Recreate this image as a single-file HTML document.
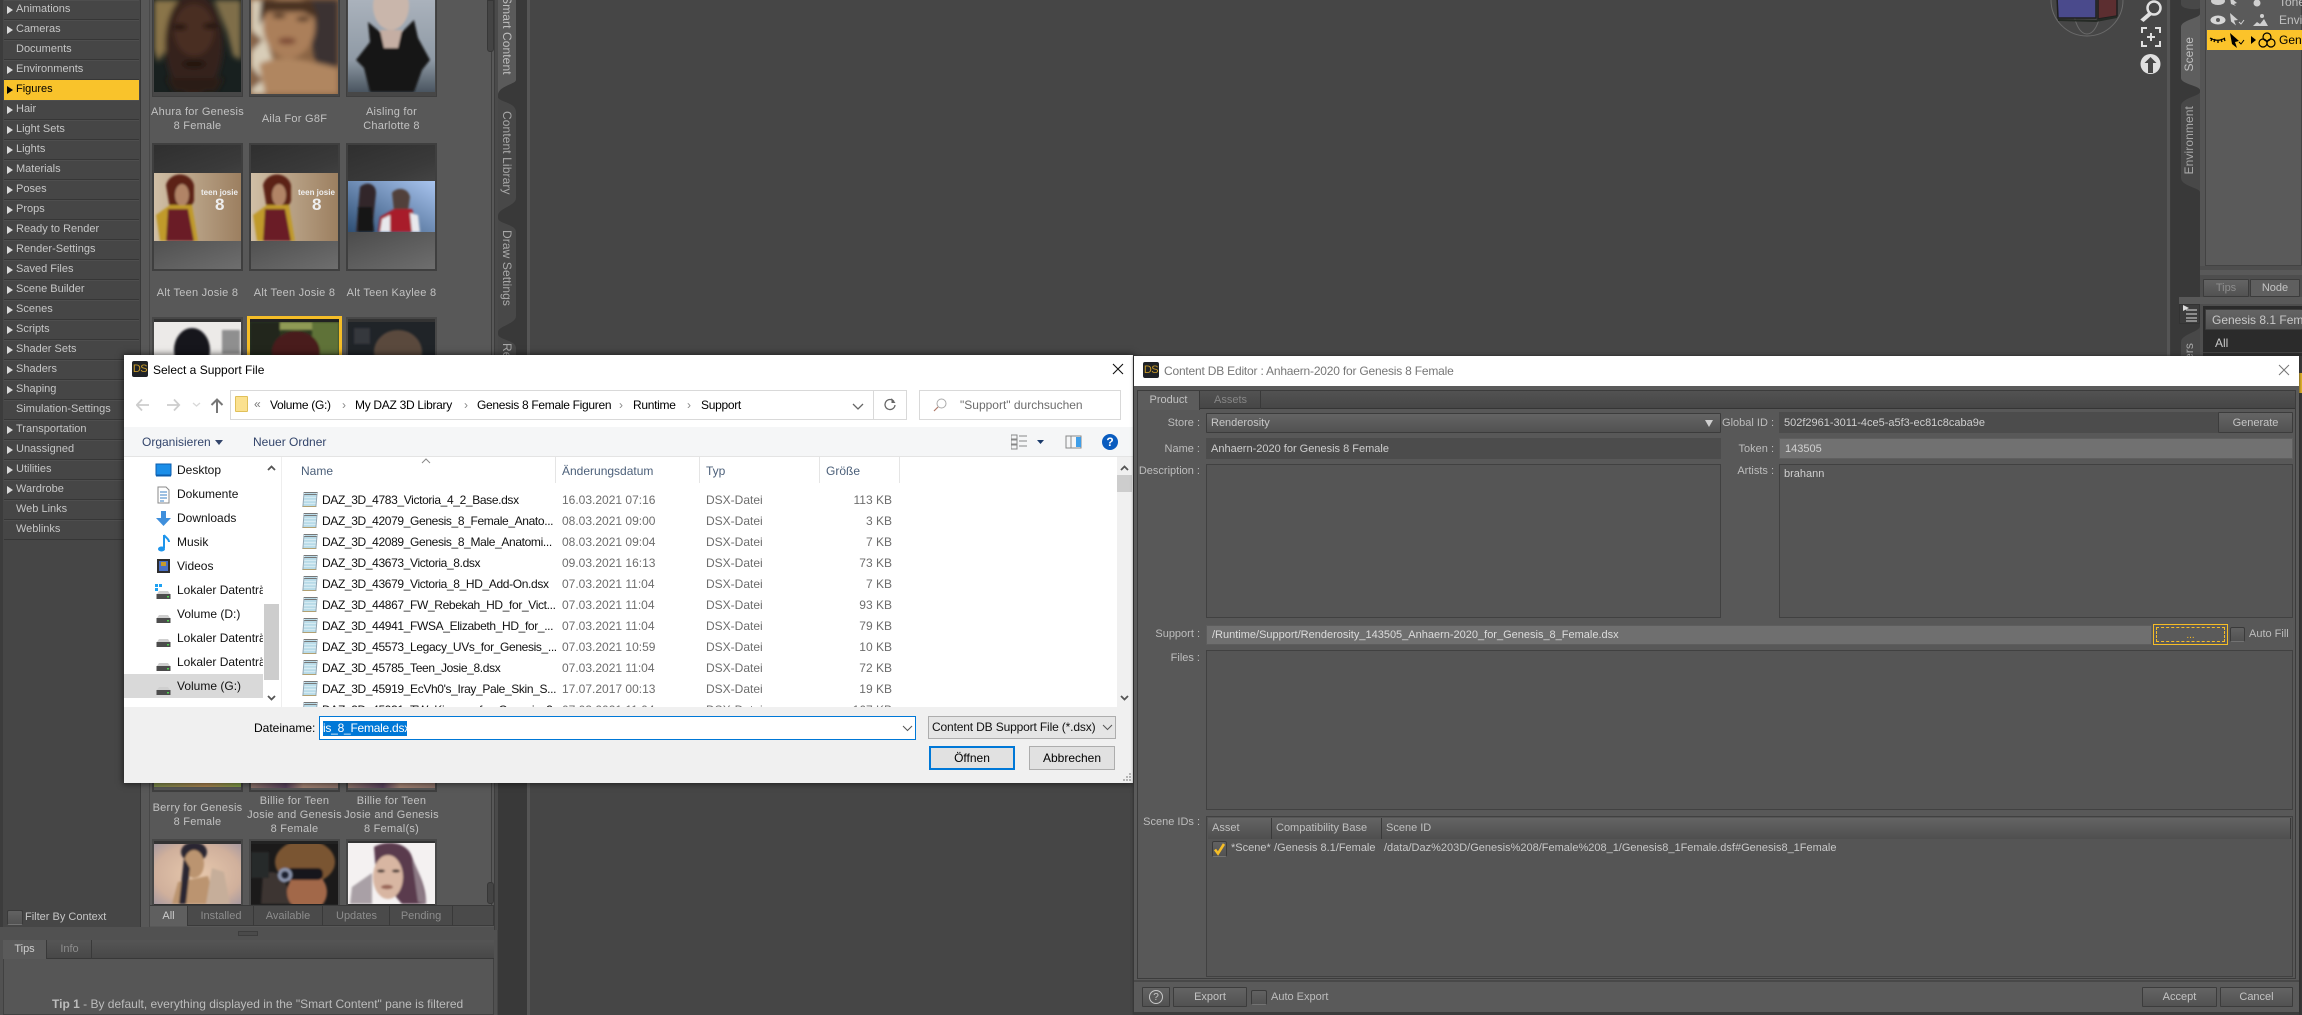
<!DOCTYPE html>
<html><head><meta charset="utf-8"><title>Content DB Editor</title>
<style>
html,body{margin:0;padding:0;background:#464646}
body{width:2302px;height:1015px;overflow:hidden;position:relative;font-family:"Liberation Sans",sans-serif;font-size:11px;color:#c4c4c4}
.a{position:absolute;white-space:nowrap;box-sizing:border-box}
svg{display:block}
.c{height:19px;line-height:19px;border-bottom:1px solid #363636;padding-left:12px;color:#c6c6c6;position:relative;box-shadow:0 1px 0 #4e4e4e inset}
.t::before{content:"";position:absolute;left:3px;top:6px;border-left:6px solid #d8d8d8;border-top:4px solid transparent;border-bottom:4px solid transparent}
.cap{text-align:center;color:#c2c2c2;line-height:14px;letter-spacing:.25px;white-space:normal}
.th{background:#474747;border:1px solid #3f3f3f;padding:0}
.vt{writing-mode:vertical-rl;font-size:12px;color:#a8a8a8;letter-spacing:.1px}
.dl{font-size:12px;color:#000;line-height:16px}
.ad{letter-spacing:-.3px}
.nv{font-size:12px;color:#111;line-height:16px;width:86px;overflow:hidden;left:177px}
.r{position:absolute;left:0;width:1100px;height:21px}
.r span{position:absolute;top:2px;line-height:16px;font-size:12px;white-space:nowrap}
.n{left:322px;color:#111;letter-spacing:-.36px}.d{left:562px;color:#6d6d6d}.y{left:706px;color:#6d6d6d}.s{right:208px;color:#6d6d6d}
.fi{position:absolute;left:303px;top:2px;width:14px;height:15px;border:1px solid #8ea4b2;border-top:3px double #777;border-bottom-color:#b3a070;background:repeating-linear-gradient(180deg,#b8dbe8 0,#b8dbe8 2px,#d8ecf3 2px,#d8ecf3 3px);box-sizing:border-box;transform:skewX(-5deg)}
.hd{font-size:12px;color:#4c607a;line-height:16px}
.vl{width:1px;background:#e5e5e5}
.lb{color:#bdbdbd;line-height:16px;text-align:right;width:90px}
.in{background:#4c4c4c;line-height:22px;color:#cfcfcf;padding-left:5px}
.box{background:#555;border:1px solid #414141}
.btn{background:linear-gradient(#646464,#525252);border:1px solid #3c3c3c;color:#c4c4c4;text-align:center;line-height:18px;border-radius:1px}
.cb{background:linear-gradient(#626262,#525252);border:1px solid #3a3a3a;border-bottom-color:#727272;border-radius:2px}
.tab{text-align:center;line-height:18px;border-right:1px solid #393939;color:#8d8d8d}
.hh{background:linear-gradient(#646464,#4f4f4f);border-right:1px solid #393939;line-height:20px;color:#c0c0c0;padding-left:4px}
</style></head><body>
<svg width="0" height="0" style="position:absolute"><filter id="b"><feGaussianBlur stdDeviation="2.6"/></filter><filter id="s"><feGaussianBlur stdDeviation="1"/></filter></svg>

<!-- left panel background -->
<div class="a" style="left:0;top:0;width:3px;height:930px;background:#3c3c3c"></div>
<div class="a" style="left:3px;top:0;width:138px;height:927px;background:#464646;border-right:1px solid #393939"></div>
<div class="a" style="left:141px;top:0;width:9px;height:930px;background:#585858;border-right:1px solid #484848"></div>
<div class="a" style="left:150px;top:0;width:344px;height:930px;background:#585858"></div>
<div class="a" style="left:0;top:927px;width:497px;height:88px;background:#515151"></div>
<div class="a" style="left:494px;top:0;width:4px;height:930px;background:#4a4a4a;border-left:1px solid #3d3d3d"></div>

<!-- category list -->
<div class="a" style="left:4px;top:0;width:135px">
<div class="c t">Animations</div><div class="c t">Cameras</div><div class="c">Documents</div><div class="c t">Environments</div>
<div class="c t" style="background:#f9c32b;color:#000;border-color:#f9c32b;box-shadow:none">Figures<i style="position:absolute;left:3px;top:6px;border-left:6px solid #000;border-top:4px solid transparent;border-bottom:4px solid transparent"></i></div>
<div class="c t">Hair</div><div class="c t">Light Sets</div><div class="c t">Lights</div><div class="c t">Materials</div><div class="c t">Poses</div><div class="c t">Props</div><div class="c t">Ready to Render</div><div class="c t">Render-Settings</div><div class="c t">Saved Files</div><div class="c t">Scene Builder</div><div class="c t">Scenes</div><div class="c t">Scripts</div><div class="c t">Shader Sets</div><div class="c t">Shaders</div><div class="c t">Shaping</div><div class="c">Simulation-Settings</div><div class="c t">Transportation</div><div class="c t">Unassigned</div><div class="c t">Utilities</div><div class="c t">Wardrobe</div><div class="c">Web Links</div><div class="c">Weblinks</div>
</div>

<!-- Thumbs row 1 -->
<div class="a th" style="left:152px;top:-30px;width:91px;height:127px"></div>
<svg class="a" style="left:154px;top:0" width="87" height="92"><rect width="87" height="92" fill="#18201f"/><g filter="url(#b)"><path d="M0 0h30l-6 20-8 24L4 62 0 50z" fill="#8a7448"/><path d="M60 0h27v60l-8-4-6-24z" fill="#7f6e4a"/><ellipse cx="40" cy="44" rx="29" ry="52" fill="#35211a"/><ellipse cx="40" cy="30" rx="20" ry="26" fill="#4a2f22"/><ellipse cx="26" cy="27" rx="7" ry="2.6" fill="#120a07"/><ellipse cx="56" cy="26" rx="7" ry="2.6" fill="#120a07"/><ellipse cx="40" cy="64" rx="12" ry="4" fill="#241209"/><path d="M12 78l58 0-8 14H20z" fill="#2a1a12"/></g></svg>
<div class="a th" style="left:249px;top:-30px;width:91px;height:127px"></div>
<svg class="a" style="left:251px;top:0" width="87" height="94"><rect width="87" height="94" fill="#8a6444"/><g filter="url(#b)"><path d="M0 0h14l-2 30 10 30-4 34H0z" fill="#d8cdb8"/><path d="M0 30l12 10L0 52zM0 66l12 14-12 10z" fill="#85644a"/><path d="M56 0h31v70H66l-6-30z" fill="#3a3330"/><ellipse cx="38" cy="26" rx="26" ry="32" fill="#ab7f5a"/><path d="M10 0h50l8 20-16-8-36 0-8 14z" fill="#4a3020"/><ellipse cx="28" cy="16" rx="7" ry="2.200" fill="#3a2416"/><ellipse cx="52" cy="19" rx="7" ry="2.200" fill="#3a2416"/><ellipse cx="36" cy="41" rx="9" ry="3.500" fill="#7d4a36"/><path d="M8 64c20-10 40-6 79 4v26H14z" fill="#b08660"/></g></svg>
<div class="a th" style="left:346px;top:-30px;width:91px;height:127px"></div>
<svg class="a" style="left:348px;top:0" width="87" height="92"><defs><linearGradient id="g3" x1="0" y1="0" x2="0" y2="1"><stop offset="0" stop-color="#aab2bc"/><stop offset=".65" stop-color="#8f9aa5"/><stop offset="1" stop-color="#4a5560"/></linearGradient></defs><rect width="87" height="92" fill="url(#g3)"/><g filter="url(#s)"><ellipse cx="43" cy="6" rx="18" ry="24" fill="#c9b6ab"/><path d="M20 22l12 10 22 0 12-12 4 18 12 22-8 10-8 22H22l-6-24-8-8 14-18z" fill="#141414"/><path d="M32 30h22l-4 18-14 0z" fill="#c5aea3"/></g></svg>
<div class="a cap" style="left:148px;top:105px;width:99px">Ahura for Genesis 8 Female</div>
<div class="a cap" style="left:245px;top:112px;width:99px">Aila For G8F</div>
<div class="a cap" style="left:342px;top:105px;width:99px">Aisling for Charlotte 8</div>

<!-- Thumbs row 2 -->
<div class="a th" style="left:152px;top:143px;width:91px;height:128px;background:linear-gradient(160deg,#2f2f2f,#3a3a3a 30%,#4f4f4f 60%,#6e6e6e);border-width:2px"></div>
<svg class="a" style="left:154px;top:173px" width="87" height="68"><defs><linearGradient id="g4" x1="0" y1="0" x2="1" y2="0"><stop offset="0" stop-color="#d0bfa6"/><stop offset="1" stop-color="#9c7f60"/></linearGradient></defs><rect width="87" height="68" fill="url(#g4)"/><g filter="url(#s)"><path d="M12 12c4-14 24-14 28 0l0 16-4 8H16z" fill="#5b2018"/><ellipse cx="28" cy="22" rx="7" ry="11" fill="#b18466"/><path d="M2 42l14-10 22 0 6 36H6z" fill="#c09a2a"/><path d="M14 36h20l6 32H12z" fill="#6a1f25"/></g><text x="47" y="22" font-size="8" font-weight="bold" fill="#eee" font-family="Liberation Sans">teen josie</text><text x="61" y="37" font-size="17" font-weight="bold" fill="#eee" font-family="Liberation Sans">8</text></svg>
<div class="a th" style="left:249px;top:143px;width:91px;height:128px;background:linear-gradient(160deg,#2f2f2f,#3a3a3a 30%,#4f4f4f 60%,#6e6e6e);border-width:2px"></div>
<svg class="a" style="left:251px;top:173px" width="87" height="68"><rect width="87" height="68" fill="url(#g4)"/><g filter="url(#s)"><path d="M12 12c4-14 24-14 28 0l0 16-4 8H16z" fill="#5b2018"/><ellipse cx="28" cy="22" rx="7" ry="11" fill="#b18466"/><path d="M2 42l14-10 22 0 6 36H6z" fill="#c09a2a"/><path d="M14 36h20l6 32H12z" fill="#6a1f25"/></g><text x="47" y="22" font-size="8" font-weight="bold" fill="#eee" font-family="Liberation Sans">teen josie</text><text x="61" y="37" font-size="17" font-weight="bold" fill="#eee" font-family="Liberation Sans">8</text></svg>
<div class="a th" style="left:346px;top:143px;width:91px;height:128px;background:linear-gradient(160deg,#2f2f2f,#3a3a3a 30%,#4f4f4f 60%,#6e6e6e);border-width:2px"></div>
<svg class="a" style="left:348px;top:181px" width="87" height="51"><defs><linearGradient id="g5" x1="0" y1="1" x2="1" y2="0"><stop offset="0" stop-color="#2f4f74"/><stop offset="1" stop-color="#a9c5f0"/></linearGradient></defs><rect width="87" height="51" fill="url(#g5)"/><g filter="url(#s)"><path d="M12 6c6-6 16-4 16 6l-4 39H8z" fill="#33282a"/><path d="M10 26h14l2 25H10z" fill="#161214"/><path d="M44 12c4-6 16-6 18 4l-2 14H46z" fill="#51403a"/><path d="M32 36l14-8h18l8 23H30z" fill="#a81f2c"/><path d="M34 38l8-4 0 17H32zM62 32l8 2 2 17h-8z" fill="#e8e8ec"/></g></svg>
<div class="a cap" style="left:148px;top:286px;width:99px">Alt Teen Josie 8</div>
<div class="a cap" style="left:245px;top:286px;width:99px">Alt Teen Josie 8</div>
<div class="a cap" style="left:342px;top:286px;width:99px">Alt Teen Kaylee 8</div>

<!-- Thumbs row 3 -->
<div class="a" style="left:152px;top:317px;width:91px;height:45px;background:#333;border:2px solid #474747"></div>
<svg class="a" style="left:154px;top:322px" width="87" height="33"><rect width="87" height="33" fill="#eceae8"/><g filter="url(#s)"><ellipse cx="38" cy="28" rx="18" ry="22" fill="#14141a"/><rect x="68" y="8" width="18" height="24" fill="#8f8f8f"/></g></svg>
<div class="a" style="left:247px;top:316px;width:95px;height:45px;border:3px solid #f5bd27;background:#222"></div>
<svg class="a" style="left:250px;top:322px" width="89" height="33"><rect width="89" height="33" fill="#2d3820"/><g filter="url(#s)"><rect x="0" y="0" width="30" height="33" fill="#20261a"/><rect x="62" y="0" width="27" height="33" fill="#5e7238"/><rect x="30" y="0" width="32" height="8" fill="#8f9a55"/><ellipse cx="46" cy="30" rx="24" ry="21" fill="#4a1c1c"/></g></svg>
<div class="a" style="left:346px;top:317px;width:91px;height:45px;background:#333;border:2px solid #474747"></div>
<svg class="a" style="left:348px;top:322px" width="87" height="33"><rect width="87" height="33" fill="#202428"/><g filter="url(#s)"><ellipse cx="50" cy="30" rx="24" ry="22" fill="#5a4a3d"/><rect x="6" y="6" width="16" height="16" fill="#34383c"/></g></svg>

<!-- bottom thumbs (behind dialog) -->
<div class="a th" style="left:152px;top:780px;width:91px;height:12px;background:#555;border-width:2px"></div>
<div class="a" style="left:154px;top:783px;width:87px;height:4px;background:linear-gradient(90deg,#7c8a4a,#a98250 60%,#7c9a45)"></div>
<div class="a th" style="left:249px;top:780px;width:91px;height:12px;background:#555;border-width:2px"></div>
<div class="a" style="left:251px;top:783px;width:87px;height:5px;background:linear-gradient(90deg,#8a7168,#55405a 40%,#a28272 60%,#8a7168)"></div>
<div class="a th" style="left:346px;top:780px;width:91px;height:12px;background:#555;border-width:2px"></div>
<div class="a" style="left:348px;top:783px;width:87px;height:5px;background:linear-gradient(90deg,#8a7168,#55405a 40%,#a28272 60%,#8a7168)"></div>
<div class="a cap" style="left:148px;top:801px;width:99px">Berry for Genesis 8 Female</div>
<div class="a cap" style="left:245px;top:794px;width:99px">Billie for Teen Josie and Genesis 8 Female</div>
<div class="a cap" style="left:342px;top:794px;width:99px">Billie for Teen Josie and Genesis 8 Femal(s)</div>

<!-- row 5 -->
<div class="a" style="left:152px;top:839px;width:91px;height:66px;background:#333;border:2px solid #474747;border-bottom:0"></div>
<svg class="a" style="left:154px;top:844px" width="87" height="60"><defs><radialGradient id="g6" cx=".5" cy=".5" r=".7"><stop offset="0" stop-color="#e8c9ad"/><stop offset=".7" stop-color="#d0b09c"/><stop offset="1" stop-color="#a89aa0"/></radialGradient></defs><rect width="87" height="60" fill="url(#g6)"/><g filter="url(#s)"><ellipse cx="40" cy="8" rx="13" ry="10" fill="#2a2530"/><ellipse cx="40" cy="20" rx="10" ry="14" fill="#bb9470"/><path d="M24 38l30-6 8 28H18z" fill="#bb9470"/><path d="M30 14l-5 46h7l4-36z" fill="#2a2530"/><path d="M58 24l12 4 6 32H52z" fill="#c6ae9a"/></g></svg>
<div class="a" style="left:249px;top:839px;width:91px;height:66px;background:#222;border:2px solid #474747;border-bottom:0"></div>
<svg class="a" style="left:251px;top:844px" width="87" height="60"><rect width="87" height="60" fill="#1b1a1a"/><g filter="url(#s)"><ellipse cx="54" cy="18" rx="30" ry="22" fill="#7a5532"/><path d="M12 30c14-6 24 2 28 30H10z" fill="#3d3431"/><ellipse cx="56" cy="48" rx="20" ry="20" fill="#a2684a"/><rect x="36" y="24" width="36" height="12" rx="5" fill="#15181f"/><circle cx="34" cy="31" r="7" fill="#8d97b0"/><circle cx="34" cy="31" r="4" fill="#1c2230"/><rect x="0" y="8" width="18" height="26" fill="#26292c"/></g></svg>
<div class="a" style="left:346px;top:839px;width:91px;height:66px;background:#333;border:2px solid #474747;border-bottom:0"></div>
<svg class="a" style="left:348px;top:843px" width="87" height="61"><rect width="87" height="61" fill="#f4f1f1"/><g filter="url(#s)"><path d="M26 4c14-8 34-4 38 10 4 12 14 26 14 47H54L28 30z" fill="#5a3a4e"/><path d="M64 16c8 14 12 30 14 45l-8-2z" fill="#8d7a85"/><path d="M4 44l20-14 0 31H2z" fill="#a9a0a6"/><ellipse cx="40" cy="34" rx="15" ry="22" fill="#d8b6a2"/><ellipse cx="33" cy="28" rx="4" ry="1.600" fill="#4a3a34"/><ellipse cx="48" cy="28" rx="4" ry="1.600" fill="#4a3a34"/><ellipse cx="39" cy="44" rx="6" ry="2.200" fill="#9a6658"/></g></svg>

<!-- thumb scrollbar -->
<div class="a" style="left:491px;top:0;width:1px;height:905px;background:#3e3e3e"></div>
<div class="a" style="left:487px;top:0;width:7px;height:52px;background:#444;border:1px solid #373737;border-radius:0 0 3px 3px"></div>
<div class="a" style="left:487px;top:882px;width:7px;height:22px;background:#444;border:1px solid #373737;border-radius:3px"></div>

<!-- filter + tabs -->
<div class="a cb" style="left:7px;top:910px;width:16px;height:15px"></div>
<div class="a" style="left:25px;top:909px;line-height:16px;color:#c6c6c6">Filter By Context</div>
<div class="a" style="left:150px;top:905px;width:344px;height:21px;background:#4a4a4a;border:1px solid #3a3a3a"></div>
<div class="a tab" style="left:150px;top:906px;width:38px;height:20px;background:#5f5f5f;color:#ccc;line-height:20px">All</div>
<div class="a tab" style="left:189px;top:906px;width:65px;height:20px;line-height:20px">Installed</div>
<div class="a tab" style="left:254px;top:906px;width:69px;height:20px;line-height:20px">Available</div>
<div class="a tab" style="left:324px;top:906px;width:66px;height:20px;line-height:20px">Updates</div>
<div class="a tab" style="left:390px;top:906px;width:63px;height:20px;line-height:20px">Pending</div>
<div class="a" style="left:238px;top:931px;width:20px;height:5px;border:1px solid #3d3d3d;background:#4a4a4a"></div>

<!-- Tips -->
<div class="a" style="left:3px;top:940px;width:491px;height:75px;background:#565656;border:1px solid #414141"></div>
<div class="a" style="left:3px;top:940px;width:491px;height:19px;background:linear-gradient(#555,#484848);border-bottom:1px solid #383838"></div>
<div class="a tab" style="left:3px;top:940px;width:44px;height:19px;background:#5a5a5a;color:#cdcdcd">Tips</div>
<div class="a tab" style="left:48px;top:940px;width:44px;height:19px;">Info</div>
<div class="a" style="left:52px;top:996px;font-size:12px;line-height:16px;color:#bcbcbc"><b>Tip 1</b> - By default, everything displayed in the "Smart Content" pane is filtered</div>

<!-- left vertical tabs -->
<div class="a" style="left:498px;top:0;width:29px;height:1015px;background:#393939"></div>
<div class="a" style="left:527px;top:0;width:3px;height:1015px;background:#555"></div>
<svg class="a" style="left:498px;top:0" width="19" height="360">
<path d="M0 0H18V80C18 84 0 86 0 95Z" fill="#5a5a5a"/>
<path d="M0 97C0 102 18 102 18 112V198C18 206 0 208 0 216Z" fill="#484848"/>
<path d="M0 218C0 224 18 224 18 232V316C18 324 0 326 0 332Z" fill="#484848"/>
<path d="M0 334C0 340 18 340 18 348V360H0Z" fill="#484848"/></svg>
<div class="a vt" style="left:500px;top:-4px;color:#bdbdbd">Smart Content</div>
<div class="a vt" style="left:500px;top:111px">Content Library</div>
<div class="a vt" style="left:500px;top:230px">Draw Settings</div>
<div class="a vt" style="left:500px;top:343px">Render</div>

<!-- Viewport gizmos -->
<svg class="a" style="left:2040px;top:-4px" width="100" height="46"><ellipse cx="47" cy="4" rx="36" ry="36" fill="none" stroke="#6a6a6a"/><ellipse cx="47" cy="8" rx="14" ry="30" fill="none" stroke="#6a6a6a"/><path d="M17 0h39v22H18z" fill="#4a4a8c" stroke="#1f1f1f" stroke-width="1.500"/><path d="M58 0h19v20l-19 3z" fill="#5c2e30" stroke="#1f1f1f" stroke-width="1.500"/><path d="M18 23l38 1 2-1 19-3v2l-21 4-38-1z" fill="#252a25"/></svg>
<svg class="a" style="left:2139px;top:0" width="24" height="76" fill="#e0e0e0"><circle cx="15" cy="8" r="6.500" fill="none" stroke="#e0e0e0" stroke-width="2.500"/><path d="M10 13l-7.500 6.500 2 1.500 7.500-6.500z" stroke="#e0e0e0" stroke-width="1.500"/><path d="M3 33v-5h5M21 33v-5h-5M3 41v5h5M21 41v5h-5" fill="none" stroke="#e0e0e0" stroke-width="2"/><path d="M12 33v8M8 37h8" stroke="#e0e0e0" stroke-width="2"/><circle cx="11.500" cy="64" r="10"/><path d="M11.500 57l6 6h-3.500v10h-5V63H5.500z" fill="#464646"/></svg>

<!-- right tabs -->
<div class="a" style="left:2167px;top:0;width:4px;height:356px;background:#555;border-right:1px solid #3c3c3c"></div>
<div class="a" style="left:2171px;top:0;width:29px;height:356px;background:#393939"></div>
<svg class="a" style="left:2181px;top:0" width="20" height="356">
<path d="M19 0V14C19 18 0 20 0 27V78C0 84 19 86 19 90Z" fill="#5e5e5e"/>
<path d="M0 0H19V8C19 10 0 10 0 4Z" fill="#484848"/>
<path d="M19 92C19 96 0 98 0 106V178C0 186 19 188 19 192Z" fill="#484848"/>
<path d="M19 326C19 332 0 334 0 342V356H19Z" fill="#484848"/></svg>
<div class="a vt" style="left:2182px;top:37px;transform:rotate(180deg);color:#c0c0c0">Scene</div>
<div class="a vt" style="left:2182px;top:106px;transform:rotate(180deg)">Environment</div>
<div class="a vt" style="left:2182px;top:343px;transform:rotate(180deg)">ers</div>

<!-- scene panel -->
<div class="a" style="left:2200px;top:0;width:102px;height:356px;background:#555"></div>
<div class="a" style="left:2205px;top:-2px;width:97px;height:268px;background:#5a5a5a;border:1px solid #434343"></div>
<div class="a" style="left:2207px;top:30px;width:95px;height:20px;background:#fbc32a"></div>
<div class="a" style="left:2279px;top:-6px;line-height:16px;font-size:12px;color:#c0c0c0">Tone</div>
<div class="a" style="left:2279px;top:12px;line-height:16px;font-size:12px;color:#c0c0c0">Envir</div>
<div class="a" style="left:2279px;top:32px;line-height:16px;font-size:12px;color:#000">Gene</div>
<svg class="a" style="left:2207px;top:0" width="72" height="50"><ellipse cx="11" cy="1" rx="7" ry="4" fill="#cfcfcf"/><path d="M23 -3l7 6-3 1 2 2-5-2z" fill="#cfcfcf"/><circle cx="50" cy="3" r="3.500" fill="#cfcfcf"/><ellipse cx="11" cy="20" rx="7.500" ry="4.500" fill="#d6d6d6"/><circle cx="11" cy="20" r="2" fill="#5a5a5a"/><path d="M23 13l8 7-4 .5 2 5-5-4z" fill="#d0d0d0"/><path d="M32 22l2 2 3-4" fill="none" stroke="#d0d0d0"/><path d="M46 26l4-4 3 2 4-5 4 7z" fill="#cfcfcf"/><circle cx="55" cy="16" r="2" fill="#cfcfcf"/><path d="M3 38c5 3 10 3 15 0M5 38l-1 3M8 39l-1 3M11 40v3M14 39l1 3M17 38l1 3" fill="none" stroke="#000" stroke-width="1.300"/><path d="M23 33l9 8-4 1 2 6-5-4z" fill="#000"/><path d="M32 42l2 2 3-4" fill="none" stroke="#000"/><path d="M44 36l5 4-5 4z" fill="#000"/><g fill="none" stroke="#000" stroke-width="1.200"><circle cx="60" cy="37" r="4"/><circle cx="56" cy="43" r="4"/><circle cx="64" cy="43" r="4"/></g></svg>
<div class="a" style="left:2200px;top:266px;width:102px;height:90px;background:#4e4e4e"></div>
<div class="a" style="left:2200px;top:270px;width:102px;height:5px;background:#595959"></div>
<div class="a btn" style="left:2203px;top:279px;width:46px;height:18px;line-height:17px;color:#8d8d8d">Tips</div>
<div class="a btn" style="left:2250px;top:279px;width:50px;height:18px;line-height:17px;background:#5f5f5f">Node</div>
<div class="a" style="left:2179px;top:297px;width:123px;height:7px;background:#595959"></div>
<div class="a" style="left:2179px;top:304px;width:21px;height:20px;background:#3c3c3c;border:1px solid #333"></div>
<svg class="a" style="left:2181px;top:305px" width="18" height="18"><path d="M2 0l6 3-6 3z" fill="#ddd"/><path d="M5 5h11M5 9h11M5 13h11M5 16h11" stroke="#ddd"/></svg>
<div class="a" style="left:2203px;top:306px;width:99px;height:50px;background:#2b2b2b"></div>
<div class="a btn" style="left:2205px;top:309px;width:97px;height:21px;text-align:left;padding-left:6px;font-size:12px;line-height:20px;color:#c8c8c8;border-right:0">Genesis 8.1 Female</div>
<div class="a" style="left:2215px;top:335px;font-size:12px;line-height:16px;color:#c8c8c8">All</div>
<div class="a" style="left:2203px;top:352px;width:99px;height:1px;background:#444"></div>
<div class="a" style="left:2299px;top:356px;width:3px;height:659px;background:#3a3a3a"></div>
<div class="a" style="left:2299px;top:373px;width:3px;height:20px;background:#e5b52b"></div>

<!-- ============ FILE DIALOG ============ -->
<div class="a" style="left:124px;top:355px;width:1009px;height:428px;background:#fff;box-shadow:0 0 6px 1px rgba(0,0,0,.55)"></div>
<div class="a" style="left:132px;top:361px;width:16px;height:16px;background:#1f2226;border-radius:2px;color:#c79a2a;font-size:11px;line-height:16px;text-align:center;letter-spacing:-.5px">DS</div>
<div class="a" style="left:153px;top:362px;font-size:12px;line-height:16px;color:#000">Select a Support File</div>
<svg class="a" style="left:1112px;top:363px" width="12" height="12"><path d="M1 1l10 10M11 1L1 11" stroke="#111" stroke-width="1.100"/></svg>

<!-- nav toolbar -->
<svg class="a" style="left:136px;top:396px" width="100" height="20" fill="none"><path d="M1 9h12M6 3.500L.8 9 6 14.500" stroke="#cdcdcd" stroke-width="1.800"/><path d="M31 9h12M38 3.500L43.200 9 38 14.500" stroke="#cdcdcd" stroke-width="1.800"/><path d="M57 7l3.500 3L64 7" stroke="#d8d8d8" stroke-width="1.300"/><path d="M81 17V4M75.500 9L81 3.500 86.500 9" stroke="#777" stroke-width="2"/></svg>
<div class="a" style="left:230px;top:390px;width:677px;height:30px;border:1px solid #d9d9d9"></div>
<div class="a" style="left:873px;top:391px;width:1px;height:28px;background:#d9d9d9"></div>
<div class="a" style="left:235px;top:396px;width:13px;height:16px;background:#fbe18f;border:1px solid #e0c05a;border-radius:1px"></div>
<div class="a dl" style="left:254px;top:396px;color:#777">«</div>
<div class="a dl ad" style="left:270px;top:397px">Volume (G:)</div>
<div class="a dl" style="left:342px;top:397px;color:#888">›</div>
<div class="a dl ad" style="left:355px;top:397px">My DAZ 3D Library</div>
<div class="a dl" style="left:464px;top:397px;color:#888">›</div>
<div class="a dl ad" style="left:477px;top:397px">Genesis 8 Female Figuren</div>
<div class="a dl" style="left:619px;top:397px;color:#888">›</div>
<div class="a dl ad" style="left:633px;top:397px">Runtime</div>
<div class="a dl" style="left:687px;top:397px;color:#888">›</div>
<div class="a dl ad" style="left:701px;top:397px">Support</div>
<svg class="a" style="left:852px;top:401px" width="40" height="12" fill="none"><path d="M1 3l5 5 5-5" stroke="#666" stroke-width="1.300"/></svg>
<svg class="a" style="left:883px;top:398px" width="14" height="14" fill="none"><path d="M11 3.500A5 5 0 1 0 12 7" stroke="#666" stroke-width="1.300"/><path d="M7.500 0v5h4z" fill="#666" transform="translate(1 0)"/></svg>
<div class="a" style="left:919px;top:390px;width:202px;height:30px;border:1px solid #d9d9d9"></div>
<svg class="a" style="left:933px;top:398px" width="14" height="14" fill="none"><circle cx="8.500" cy="5.500" r="4.500" stroke="#aaa"/><path d="M5 9l-4 4" stroke="#b07a6a" stroke-width="1.200"/></svg>
<div class="a dl" style="left:960px;top:397px;color:#6d6d6d">"Support" durchsuchen</div>

<!-- command bar -->
<div class="a" style="left:124px;top:427px;width:1009px;height:30px;background:#f5f6f7;border-bottom:1px solid #e4e4e4"></div>
<div class="a dl" style="left:142px;top:434px;color:#33456b">Organisieren</div>
<div class="a" style="left:215px;top:440px;border-top:5px solid #33456b;border-left:4px solid transparent;border-right:4px solid transparent"></div>
<div class="a dl" style="left:253px;top:434px;color:#33456b">Neuer Ordner</div>
<svg class="a" style="left:1011px;top:434px" width="100" height="18" fill="none"><path d="M0 1h6v4H0zM0 6h6v4H0zM0 11h6v4H0z" stroke="#888"/><path d="M8 2h8M8 7h8M8 12h8" stroke="#888"/><path d="M26 6h7l-3.500 4z" fill="#1a3a6a"/><rect x="55" y="2" width="15" height="12" stroke="#888"/><rect x="65" y="3" width="5" height="10" fill="#3f9ee8"/><path d="M60 2v12" stroke="#888"/></svg>
<div class="a" style="left:1102px;top:434px;width:16px;height:16px;border-radius:50%;background:#0a5cbf;color:#fff;font-weight:bold;font-size:12px;line-height:16px;text-align:center">?</div>

<!-- nav pane -->
<div class="a" style="left:124px;top:674px;width:139px;height:24px;background:#d9d9d9"></div>
<div class="a nv" style="top:462px">Desktop</div>
<div class="a nv" style="top:486px">Dokumente</div>
<div class="a nv" style="top:510px">Downloads</div>
<div class="a nv" style="top:534px">Musik</div>
<div class="a nv" style="top:558px">Videos</div>
<div class="a nv" style="top:582px">Lokaler Datenträger</div>
<div class="a nv" style="top:606px">Volume (D:)</div>
<div class="a nv" style="top:630px">Lokaler Datenträger</div>
<div class="a nv" style="top:654px">Lokaler Datenträger</div>
<div class="a nv" style="top:678px">Volume (G:)</div>
<svg class="a" style="left:155px;top:462px" width="18" height="236">
<rect x="1" y="2" width="15" height="11" fill="#1b8ee8" stroke="#0b5cad"/><rect x="1" y="13" width="15" height="1.500" fill="#0b5cad"/>
<path d="M3 25h8l3 3v13H3z" fill="#fff" stroke="#888"/><path d="M5 30h7M5 33h7M5 36h7M5 39h4" stroke="#3b82c4"/>
<path d="M6 49h5v7h5l-7.500 8L1 56h5z" fill="#3f8fdc"/>
<path d="M9 73v13M9 73c2 3 5 4 5 7" fill="none" stroke="#1e95ec" stroke-width="2"/><ellipse cx="6.500" cy="87" rx="3.500" ry="2.500" fill="#1e95ec"/>
<rect x="2" y="97" width="13" height="14" fill="#2e2e2e"/><rect x="4" y="99" width="9" height="10" fill="#4a70c4"/><rect x="6" y="100" width="5" height="4" fill="#c79a2a"/>
<rect x="0" y="122" width="3" height="3" fill="#1da1f2"/><rect x="4" y="122" width="3" height="3" fill="#1da1f2"/><rect x="0" y="126" width="3" height="3" fill="#1da1f2"/>
<path d="M2 132l2-3h9l2 3z" fill="#cfcfcf"/><rect x="1.500" y="132" width="14" height="5" fill="#4c4c4c"/><rect x="12" y="134" width="2" height="1.500" fill="#4ed04e"/>
<path d="M2 156l2-3h9l2 3z" fill="#cfcfcf"/><rect x="1.500" y="156" width="14" height="5" fill="#4c4c4c"/><rect x="12" y="158" width="2" height="1.500" fill="#4ed04e"/>
<path d="M2 180l2-3h9l2 3z" fill="#cfcfcf"/><rect x="1.500" y="180" width="14" height="5" fill="#4c4c4c"/><rect x="12" y="182" width="2" height="1.500" fill="#4ed04e"/>
<path d="M2 204l2-3h9l2 3z" fill="#cfcfcf"/><rect x="1.500" y="204" width="14" height="5" fill="#4c4c4c"/><rect x="12" y="206" width="2" height="1.500" fill="#4ed04e"/>
<path d="M2 228l2-3h9l2 3z" fill="#cfcfcf"/><rect x="1.500" y="228" width="14" height="5" fill="#4c4c4c"/><rect x="12" y="230" width="2" height="1.500" fill="#4ed04e"/>
</svg>
<div class="a" style="left:264px;top:604px;width:15px;height:76px;background:#cdcdcd"></div>
<svg class="a" style="left:267px;top:463px" width="9" height="242" fill="none"><path d="M1 7l3.500-3.500L8 7M1 233l3.500 3.500L8 233" stroke="#555" stroke-width="1.800"/></svg>
<div class="a" style="left:281px;top:457px;width:1px;height:250px;background:#eee"></div>

<!-- list header -->
<svg class="a" style="left:421px;top:458px" width="10" height="6" fill="none"><path d="M1 5l4-4 4 4" stroke="#888"/></svg>
<div class="a hd" style="left:301px;top:463px">Name</div>
<div class="a vl" style="left:555px;top:457px;height:26px"></div>
<div class="a hd" style="left:562px;top:463px">Änderungsdatum</div>
<div class="a vl" style="left:699px;top:457px;height:26px"></div>
<div class="a hd" style="left:706px;top:463px">Typ</div>
<div class="a vl" style="left:819px;top:457px;height:26px"></div>
<div class="a hd" style="left:826px;top:463px">Größe</div>
<div class="a vl" style="left:899px;top:457px;height:26px"></div>

<!-- list rows -->
<div class="a" style="left:0;top:490px;width:1120px;height:217px;overflow:hidden">
<div class="r" style="top:0"><i class="fi"></i><span class="n">DAZ_3D_4783_Victoria_4_2_Base.dsx</span><span class="d">16.03.2021 07:16</span><span class="y">DSX-Datei</span><span class="s">113 KB</span></div>
<div class="r" style="top:21px"><i class="fi"></i><span class="n">DAZ_3D_42079_Genesis_8_Female_Anato...</span><span class="d">08.03.2021 09:00</span><span class="y">DSX-Datei</span><span class="s">3 KB</span></div>
<div class="r" style="top:42px"><i class="fi"></i><span class="n">DAZ_3D_42089_Genesis_8_Male_Anatomi...</span><span class="d">08.03.2021 09:04</span><span class="y">DSX-Datei</span><span class="s">7 KB</span></div>
<div class="r" style="top:63px"><i class="fi"></i><span class="n">DAZ_3D_43673_Victoria_8.dsx</span><span class="d">09.03.2021 16:13</span><span class="y">DSX-Datei</span><span class="s">73 KB</span></div>
<div class="r" style="top:84px"><i class="fi"></i><span class="n">DAZ_3D_43679_Victoria_8_HD_Add-On.dsx</span><span class="d">07.03.2021 11:04</span><span class="y">DSX-Datei</span><span class="s">7 KB</span></div>
<div class="r" style="top:105px"><i class="fi"></i><span class="n">DAZ_3D_44867_FW_Rebekah_HD_for_Vict...</span><span class="d">07.03.2021 11:04</span><span class="y">DSX-Datei</span><span class="s">93 KB</span></div>
<div class="r" style="top:126px"><i class="fi"></i><span class="n">DAZ_3D_44941_FWSA_Elizabeth_HD_for_...</span><span class="d">07.03.2021 11:04</span><span class="y">DSX-Datei</span><span class="s">79 KB</span></div>
<div class="r" style="top:147px"><i class="fi"></i><span class="n">DAZ_3D_45573_Legacy_UVs_for_Genesis_...</span><span class="d">07.03.2021 10:59</span><span class="y">DSX-Datei</span><span class="s">10 KB</span></div>
<div class="r" style="top:168px"><i class="fi"></i><span class="n">DAZ_3D_45785_Teen_Josie_8.dsx</span><span class="d">07.03.2021 11:04</span><span class="y">DSX-Datei</span><span class="s">72 KB</span></div>
<div class="r" style="top:189px"><i class="fi"></i><span class="n">DAZ_3D_45919_EcVh0's_Iray_Pale_Skin_S...</span><span class="d">17.07.2017 00:13</span><span class="y">DSX-Datei</span><span class="s">19 KB</span></div>
<div class="r" style="top:210px"><i class="fi"></i><span class="n">DAZ_3D_45931_TW_Kimono_for_Genesis_3</span><span class="d">07.03.2021 11:04</span><span class="y">DSX-Datei</span><span class="s">167 KB</span></div>
</div>
<!-- list scrollbar -->
<div class="a" style="left:1117px;top:457px;width:16px;height:250px;background:#f0f0f0"></div>
<div class="a" style="left:1117px;top:475px;width:15px;height:17px;background:#cdcdcd"></div>
<svg class="a" style="left:1120px;top:463px" width="9" height="242" fill="none"><path d="M1 7l3.500-3.500L8 7M1 233l3.500 3.500L8 233" stroke="#555" stroke-width="1.800"/></svg>

<!-- footer -->
<div class="a" style="left:124px;top:707px;width:1009px;height:76px;background:#f0f0f0"></div>
<div class="a dl" style="left:254px;top:720px">Dateiname:</div>
<div class="a" style="left:319px;top:716px;width:597px;height:24px;background:#fff;border:1px solid #0078d7"></div>
<div class="a" style="left:323px;top:721px;width:84px;height:15px;background:#0078d7;color:#fff;font-size:12px;line-height:15px;overflow:hidden;letter-spacing:-.25px">is_8_Female.dsx</div>
<svg class="a" style="left:902px;top:725px" width="11" height="8" fill="none"><path d="M1 1l4.500 4.500L10 1" stroke="#555"/></svg>
<div class="a" style="left:928px;top:716px;width:188px;height:23px;background:#e5e5e5;border:1px solid #adadad;font-size:12px;line-height:21px;color:#111;padding-left:3px;letter-spacing:-.15px">Content DB Support File (*.dsx)</div>
<svg class="a" style="left:1102px;top:724px" width="11" height="8" fill="none"><path d="M1 1l4.500 4.500L10 1" stroke="#555"/></svg>
<div class="a" style="left:929px;top:746px;width:86px;height:24px;background:#e1e1e1;border:2px solid #0078d7;font-size:12px;line-height:20px;text-align:center;color:#000">Öffnen</div>
<div class="a" style="left:1029px;top:746px;width:86px;height:24px;background:#e1e1e1;border:1px solid #adadad;font-size:12px;line-height:22px;text-align:center;color:#000">Abbrechen</div>
<svg class="a" style="left:1122px;top:772px" width="10" height="10" fill="#b5b5b5"><rect x="7" y="1" width="2" height="2"/><rect x="4" y="4" width="2" height="2"/><rect x="7" y="4" width="2" height="2"/><rect x="1" y="7" width="2" height="2"/><rect x="4" y="7" width="2" height="2"/><rect x="7" y="7" width="2" height="2"/></svg>

<!-- ============ CONTENT DB EDITOR ============ -->
<div class="a" style="left:1134px;top:356px;width:1165px;height:659px;background:#5a5a5a;box-shadow:0 0 3px #222"></div>
<div class="a" style="left:1134px;top:356px;width:1165px;height:30px;background:#fff"></div>
<div class="a" style="left:1143px;top:362px;width:16px;height:16px;background:#1f2226;border-radius:2px;color:#c79a2a;font-size:11px;line-height:16px;text-align:center;letter-spacing:-.5px">DS</div>
<div class="a" style="left:1164px;top:363px;font-size:12px;line-height:16px;color:#777;letter-spacing:-.2px">Content DB Editor : Anhaern-2020 for Genesis 8 Female</div>
<svg class="a" style="left:2278px;top:364px" width="12" height="12"><path d="M1 1l10 10M11 1L1 11" stroke="#777"/></svg>

<div class="a" style="left:1137px;top:390px;width:1159px;height:589px;background:#585858;border:1px solid #3c3c3c"></div>
<div class="a" style="left:1138px;top:391px;width:1157px;height:18px;background:linear-gradient(#525252,#464646);border-bottom:1px solid #353535"></div>
<div class="a tab" style="left:1138px;top:391px;width:62px;height:19px;background:#5c5c5c;color:#c2c2c2">Product</div>
<div class="a tab" style="left:1201px;top:391px;width:60px;height:18px;color:#868686">Assets</div>

<div class="a lb" style="left:1110px;top:415px">Store :</div>
<div class="a btn" style="left:1206px;top:413px;width:515px;height:20px;text-align:left;padding-left:4px;color:#c8c8c8;line-height:19px">Renderosity</div>
<div class="a" style="left:1705px;top:420px;border-top:7px solid #cfcfcf;border-left:4px solid transparent;border-right:4px solid transparent"></div>
<div class="a lb" style="left:1110px;top:441px">Name :</div>
<div class="a in" style="left:1206px;top:438px;width:515px;height:21px">Anhaern-2020 for Genesis 8 Female</div>
<div class="a lb" style="left:1110px;top:463px">Description :</div>
<div class="a box" style="left:1206px;top:464px;width:515px;height:154px"></div>
<div class="a lb" style="left:1110px;top:626px">Support :</div>
<div class="a in" style="left:1206px;top:625px;width:946px;height:20px;background:#6f6f6f;color:#dcdcdc;line-height:19px;border:1px solid #5d5d5d">/Runtime/Support/Renderosity_143505_Anhaern-2020_for_Genesis_8_Female.dsx</div>

<div class="a lb" style="left:1684px;top:415px">Global ID :</div>
<div class="a in" style="left:1779px;top:412px;width:439px;height:21px">502f2961-3011-4ce5-a5f3-ec81c8caba9e</div>
<div class="a btn" style="left:2218px;top:412px;width:75px;height:21px;line-height:20px">Generate</div>
<div class="a lb" style="left:1684px;top:441px">Token :</div>
<div class="a in" style="left:1779px;top:438px;width:514px;height:21px;background:#717171;color:#d0d0d0;border:1px solid #5f5f5f;line-height:20px">143505</div>
<div class="a lb" style="left:1684px;top:463px">Artists :</div>
<div class="a box" style="left:1779px;top:464px;width:514px;height:154px;padding:1px 0 0 4px;line-height:16px;color:#cfcfcf">brahann</div>

<div class="a" style="left:2153px;top:624px;width:75px;height:21px;border:1px solid #f5bd27;background:#5a5a5a"></div>
<div class="a" style="left:2156px;top:627px;width:69px;height:15px;border:1px dashed #f5bd27;color:#f5bd27;text-align:center;line-height:16px;font-size:10px">...</div>
<div class="a cb" style="left:2230px;top:627px;width:15px;height:15px"></div>
<div class="a" style="left:2249px;top:626px;line-height:16px;color:#bdbdbd">Auto Fill</div>

<div class="a lb" style="left:1110px;top:650px">Files :</div>
<div class="a box" style="left:1206px;top:650px;width:1087px;height:160px"></div>

<div class="a lb" style="left:1110px;top:814px">Scene IDs :</div>
<div class="a box" style="left:1206px;top:816px;width:1087px;height:161px"></div>
<div class="a hh" style="left:1208px;top:818px;width:64px;height:21px">Asset</div>
<div class="a hh" style="left:1272px;top:818px;width:110px;height:21px">Compatibility Base</div>
<div class="a hh" style="left:1382px;top:818px;width:909px;height:21px">Scene ID</div>
<div class="a cb" style="left:1212px;top:841px;width:15px;height:16px"></div>
<svg class="a" style="left:1213px;top:842px" width="13" height="14" fill="none"><path d="M2 7.500l3 4L11 2" stroke="#f5bd27" stroke-width="2.600"/></svg>
<div class="a" style="left:1231px;top:840px;line-height:16px;color:#c8c8c8">*Scene*</div>
<div class="a" style="left:1274px;top:840px;line-height:16px;color:#c8c8c8">/Genesis 8.1/Female</div>
<div class="a" style="left:1384px;top:840px;line-height:16px;color:#c8c8c8">/data/Daz%203D/Genesis%208/Female%208_1/Genesis8_1Female.dsf#Genesis8_1Female</div>

<div class="a" style="left:1134px;top:980px;width:1165px;height:2px;background:#484848"></div>
<div class="a btn" style="left:1142px;top:987px;width:28px;height:20px"></div>
<div class="a" style="left:1149px;top:990px;width:14px;height:14px;border:1px solid #c8c8c8;border-radius:50%;color:#c8c8c8;font-size:10px;line-height:13px;text-align:center">?</div>
<div class="a btn" style="left:1173px;top:987px;width:74px;height:20px">Export</div>
<div class="a cb" style="left:1251px;top:990px;width:16px;height:15px"></div>
<div class="a" style="left:1271px;top:989px;line-height:16px;color:#bdbdbd">Auto Export</div>
<div class="a btn" style="left:2142px;top:987px;width:75px;height:20px">Accept</div>
<div class="a btn" style="left:2220px;top:987px;width:73px;height:20px">Cancel</div>
<div class="a" style="left:1134px;top:1012px;width:1165px;height:3px;background:#3c3c3c"></div>
</body></html>
